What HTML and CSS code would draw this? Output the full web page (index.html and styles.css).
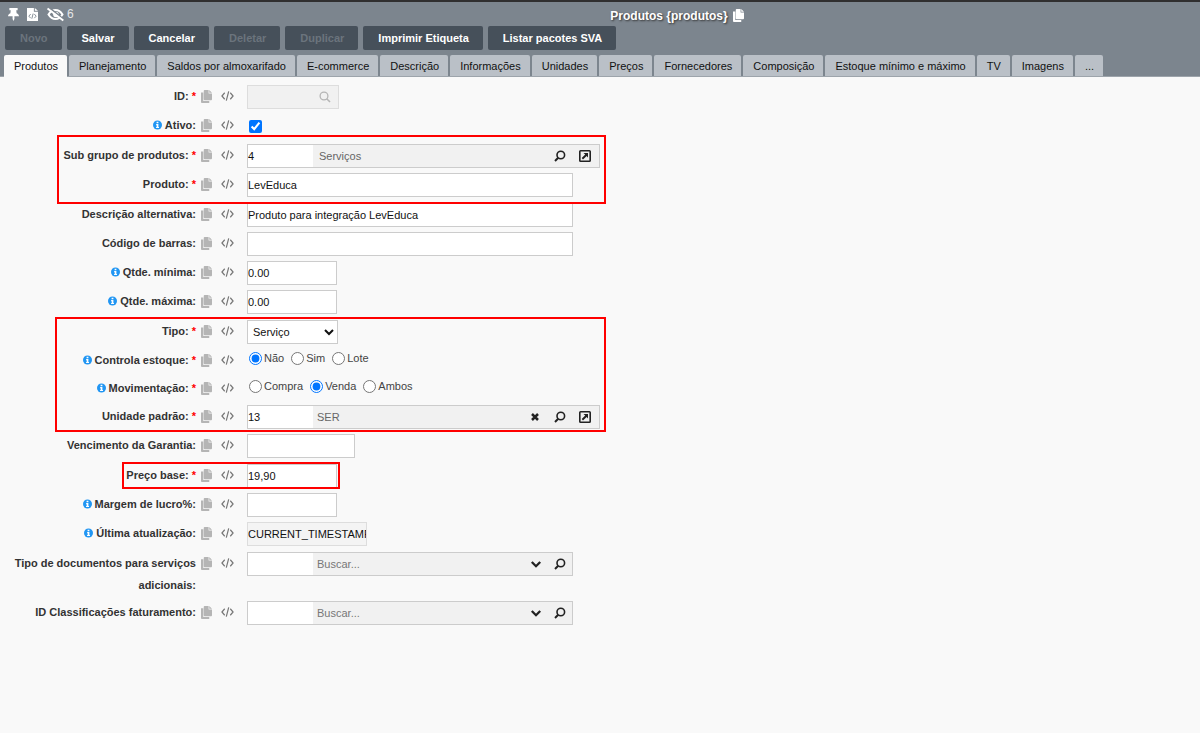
FILE: index.html
```html
<!DOCTYPE html>
<html lang="pt-BR">
<head>
<meta charset="utf-8">
<title>Produtos</title>
<link rel="stylesheet" href="styles.css">
</head>
<body>
<svg class="sprite" aria-hidden="true">
  <symbol id="copy" viewBox="0 0 12 14"><path d="M0 2.500h2.500V12H9v2H1a1 1 0 0 1-1-1zM4 0h4.300v3.700H12V10a1 1 0 0 1-1 1H4a1 1 0 0 1-1-1V1a1 1 0 0 1 1-1zM9 0l3 3H9z"/></symbol>
  <symbol id="code" viewBox="0 0 14 12"><path d="M4 2.500L1 6l3 3.500M10 2.500L13 6l-3 3.500M8.300 1L5.700 11" fill="none" stroke="currentColor" stroke-width="1.300"/></symbol>
  <symbol id="info" viewBox="0 0 10 10"><circle cx="5" cy="5" r="5"/><path d="M4 1.500h2v1.600H4zM3.500 4h2.500v3.200h.7v1.200H3.400V7.200h.7v-2h-.6z" fill="#fff"/></symbol>
  <symbol id="search" viewBox="0 0 12 12"><circle cx="5" cy="5" r="3.900" fill="none" stroke="currentColor" stroke-width="1.300"/><path d="M7.700 7.700L11 11" stroke="currentColor" stroke-width="1.600"/></symbol>
  <symbol id="lens" viewBox="0 0 12 12"><circle cx="6.800" cy="5" r="3.800" fill="none" stroke="currentColor" stroke-width="1.600"/><path d="M4.200 7.800L1 11" stroke="currentColor" stroke-width="2"/></symbol>
  <symbol id="open" viewBox="0 0 12 12"><rect x=".8" y=".8" width="10.400" height="10.400" rx=".8" fill="none" stroke="currentColor" stroke-width="1.600"/><path d="M4.500 3H9v4.500L7.600 6 4 9.400 2.700 8.100 6.200 4.600z"/></symbol>
  <symbol id="clear" viewBox="0 0 12 12"><path d="M3 3l6 6M9 3L3 9" stroke="currentColor" stroke-width="2.500"/></symbol>
  <symbol id="down" viewBox="0 0 12 12"><path d="M1.800 4L6 8.200 10.200 4" fill="none" stroke="currentColor" stroke-width="2.300"/></symbol>
</svg>

<header class="header">
  <div class="titlebar">
    <div class="tools">
      <svg class="tool-pin" viewBox="0 0 12 14" role="img" aria-label="Fixar"><path d="M1.500 0h9v2.300H9l.4 3.200C11 6.200 12 7.300 12 9H7v3l-1 2-1-2V9H0c0-1.700 1-2.800 2.600-3.500L3 2.300H1.500z"/></svg>
      <svg class="tool-file" viewBox="0 0 12 14" role="img" aria-label="Código"><path d="M0 0h7.500v4H12v10H0zM8.500 0L12 3H8.500z"/><path d="M4 6.500L2 8.800 4 11M8 6.500l2 2.300L8 11M6.700 6l-1.400 5.500" fill="none" stroke="#7c858e"/></svg>
      <svg class="tool-eye" viewBox="0 0 18 14" role="img" aria-label="Campos ocultos"><path d="M1.500 7C3.500 3.700 6 2.200 9 2.200s5.500 1.500 7.500 4.800c-2 3.300-4.500 4.800-7.500 4.800S3.500 10.300 1.500 7z" fill="none" stroke="currentColor" stroke-width="2.200"/><circle cx="9.500" cy="7" r="3"/><path d="M1.500-.8l16.500 13" stroke="#7c858e" stroke-width="1.800"/><path d="M.4.500l17 13" stroke="currentColor" stroke-width="2"/></svg>
      <span class="hidden-count">6</span>
    </div>
    <h1 class="title">Produtos {produtos} <svg class="icon-copy"><use href="#copy"/></svg></h1>
  </div>
  <div class="actions">
    <button class="action" disabled>Novo</button>
    <button class="action">Salvar</button>
    <button class="action">Cancelar</button>
    <button class="action" disabled>Deletar</button>
    <button class="action" disabled>Duplicar</button>
    <button class="action">Imprimir Etiqueta</button>
    <button class="action">Listar pacotes SVA</button>
  </div>
  <nav class="tabs">
    <button class="tab tab-active">Produtos</button>
    <button class="tab">Planejamento</button>
    <button class="tab">Saldos por almoxarifado</button>
    <button class="tab">E-commerce</button>
    <button class="tab">Descrição</button>
    <button class="tab">Informações</button>
    <button class="tab">Unidades</button>
    <button class="tab">Preços</button>
    <button class="tab">Fornecedores</button>
    <button class="tab">Composição</button>
    <button class="tab">Estoque mínimo e máximo</button>
    <button class="tab">TV</button>
    <button class="tab">Imagens</button>
    <button class="tab">...</button>
  </nav>
</header>

<main>
<form class="form">
  <div class="group">
    <div class="row">
      <div class="name"><label for="id">ID: <b class="req">*</b></label></div>
      <div class="aids"><svg class="icon-copy"><use href="#copy"/></svg><svg class="icon-code"><use href="#code"/></svg></div>
      <div class="lookup lookup-id"><input id="id" class="part part-id" disabled><svg class="icon muted"><use href="#search"/></svg></div>
    </div>
    <div class="row">
      <div class="name"><svg class="icon-info"><use href="#info"/></svg><label for="ativo">Ativo:</label></div>
      <div class="aids"><svg class="icon-copy"><use href="#copy"/></svg><svg class="icon-code"><use href="#code"/></svg></div>
      <div class="checks"><input id="ativo" class="tick" type="checkbox" checked></div>
    </div>
  </div>

  <div class="group mark mark-product">
    <div class="row">
      <div class="name"><label for="sub">Sub grupo de produtos: <b class="req">*</b></label></div>
      <div class="aids"><svg class="icon-copy"><use href="#copy"/></svg><svg class="icon-code"><use href="#code"/></svg></div>
      <div class="lookup lookup-wide"><input id="sub" class="part part-code" value="4"><span class="part-text">Serviços</span>
        <button type="button" class="pick" aria-label="Pesquisar"><svg class="icon"><use href="#lens"/></svg></button>
        <button type="button" class="pick" aria-label="Abrir"><svg class="icon"><use href="#open"/></svg></button></div>
    </div>
    <div class="row">
      <div class="name"><label for="produto">Produto: <b class="req">*</b></label></div>
      <div class="aids"><svg class="icon-copy"><use href="#copy"/></svg><svg class="icon-code"><use href="#code"/></svg></div>
      <input id="produto" class="field field-long" value="LevEduca">
    </div>
  </div>

  <div class="group">
    <div class="row">
      <div class="name"><label for="desc">Descrição alternativa:</label></div>
      <div class="aids"><svg class="icon-copy"><use href="#copy"/></svg><svg class="icon-code"><use href="#code"/></svg></div>
      <input id="desc" class="field field-long" value="Produto para integração LevEduca">
    </div>
    <div class="row">
      <div class="name"><label for="barras">Código de barras:</label></div>
      <div class="aids"><svg class="icon-copy"><use href="#copy"/></svg><svg class="icon-code"><use href="#code"/></svg></div>
      <input id="barras" class="field field-long">
    </div>
    <div class="row">
      <div class="name"><svg class="icon-info"><use href="#info"/></svg><label for="qmin">Qtde. mínima:</label></div>
      <div class="aids"><svg class="icon-copy"><use href="#copy"/></svg><svg class="icon-code"><use href="#code"/></svg></div>
      <input id="qmin" class="field field-short" value="0.00">
    </div>
    <div class="row">
      <div class="name"><svg class="icon-info"><use href="#info"/></svg><label for="qmax">Qtde. máxima:</label></div>
      <div class="aids"><svg class="icon-copy"><use href="#copy"/></svg><svg class="icon-code"><use href="#code"/></svg></div>
      <input id="qmax" class="field field-short" value="0.00">
    </div>
  </div>

  <div class="group mark mark-type">
    <div class="row">
      <div class="name"><label for="tipo">Tipo: <b class="req">*</b></label></div>
      <div class="aids"><svg class="icon-copy"><use href="#copy"/></svg><svg class="icon-code"><use href="#code"/></svg></div>
      <select id="tipo" class="field field-select"><option>Serviço</option></select>
    </div>
    <div class="row row-radio">
      <div class="name"><svg class="icon-info"><use href="#info"/></svg><span id="estoque">Controla estoque: <b class="req">*</b></span></div>
      <div class="aids"><svg class="icon-copy"><use href="#copy"/></svg><svg class="icon-code"><use href="#code"/></svg></div>
      <div class="checks" role="radiogroup" aria-labelledby="estoque">
        <label class="choice"><input class="tick" type="radio" name="estoque" checked>Não</label>
        <label class="choice"><input class="tick" type="radio" name="estoque">Sim</label>
        <label class="choice"><input class="tick" type="radio" name="estoque">Lote</label>
      </div>
    </div>
    <div class="row row-radio">
      <div class="name"><svg class="icon-info"><use href="#info"/></svg><span id="mov">Movimentação: <b class="req">*</b></span></div>
      <div class="aids"><svg class="icon-copy"><use href="#copy"/></svg><svg class="icon-code"><use href="#code"/></svg></div>
      <div class="checks" role="radiogroup" aria-labelledby="mov">
        <label class="choice"><input class="tick" type="radio" name="mov">Compra</label>
        <label class="choice"><input class="tick" type="radio" name="mov" checked>Venda</label>
        <label class="choice"><input class="tick" type="radio" name="mov">Ambos</label>
      </div>
    </div>
    <div class="row">
      <div class="name"><label for="unidade">Unidade padrão: <b class="req">*</b></label></div>
      <div class="aids"><svg class="icon-copy"><use href="#copy"/></svg><svg class="icon-code"><use href="#code"/></svg></div>
      <div class="lookup lookup-wide"><input id="unidade" class="part part-code" value="13"><input class="part part-name" value="SER" aria-label="Nome da unidade">
        <button type="button" class="pick" aria-label="Limpar"><svg class="icon"><use href="#clear"/></svg></button>
        <button type="button" class="pick" aria-label="Pesquisar"><svg class="icon"><use href="#lens"/></svg></button>
        <button type="button" class="pick" aria-label="Abrir"><svg class="icon"><use href="#open"/></svg></button></div>
    </div>
  </div>

  <div class="group group-tight">
    <div class="row">
      <div class="name"><label for="garantia">Vencimento da Garantia:</label></div>
      <div class="aids"><svg class="icon-copy"><use href="#copy"/></svg><svg class="icon-code"><use href="#code"/></svg></div>
      <input id="garantia" class="field field-date">
    </div>
  </div>

  <div class="group mark mark-price">
    <div class="row">
      <div class="name"><label for="preco">Preço base: <b class="req">*</b></label></div>
      <div class="aids"><svg class="icon-copy"><use href="#copy"/></svg><svg class="icon-code"><use href="#code"/></svg></div>
      <input id="preco" class="field field-short" value="19,90">
    </div>
  </div>

  <div class="group group-tight">
    <div class="row">
      <div class="name"><svg class="icon-info"><use href="#info"/></svg><label for="margem">Margem de lucro%:</label></div>
      <div class="aids"><svg class="icon-copy"><use href="#copy"/></svg><svg class="icon-code"><use href="#code"/></svg></div>
      <input id="margem" class="field field-short">
    </div>
    <div class="row">
      <div class="name"><svg class="icon-info"><use href="#info"/></svg><label for="atualizacao">Última atualização:</label></div>
      <div class="aids"><svg class="icon-copy"><use href="#copy"/></svg><svg class="icon-code"><use href="#code"/></svg></div>
      <input id="atualizacao" class="field field-stamp" value="CURRENT_TIMESTAMP" readonly>
    </div>
  </div>

  <div class="group">
    <div class="row">
      <div class="name"><label for="docs">Tipo de documentos para serviços adicionais:</label></div>
      <div class="aids"><svg class="icon-copy"><use href="#copy"/></svg><svg class="icon-code"><use href="#code"/></svg></div>
      <div class="lookup lookup-long"><input id="docs" class="part part-code"><input class="part part-name" placeholder="Buscar..." aria-label="Buscar tipo de documentos">
        <button type="button" class="pick" aria-label="Listar"><svg class="icon"><use href="#down"/></svg></button>
        <button type="button" class="pick" aria-label="Pesquisar"><svg class="icon"><use href="#lens"/></svg></button></div>
    </div>
    <div class="row">
      <div class="name"><label for="classif">ID Classificações faturamento:</label></div>
      <div class="aids"><svg class="icon-copy"><use href="#copy"/></svg><svg class="icon-code"><use href="#code"/></svg></div>
      <div class="lookup lookup-long"><input id="classif" class="part part-code"><input class="part part-name" placeholder="Buscar..." aria-label="Buscar classificação">
        <button type="button" class="pick" aria-label="Listar"><svg class="icon"><use href="#down"/></svg></button>
        <button type="button" class="pick" aria-label="Pesquisar"><svg class="icon"><use href="#lens"/></svg></button></div>
    </div>
  </div>
</form>
</main>
</body>
</html>
```
FILE: styles.css
```css
*, *::after { box-sizing: border-box; }

body {
  margin: 0;
  background: #f9f9f9;
  color: #333;
  font: 11px "Liberation Sans", Arial, sans-serif;
}

button, input, select { font: inherit; margin: 0; }

svg { fill: currentColor; flex: none; overflow: visible; }

.sprite { display: none; }

/* Header */
.header {
  background: #7c858e;
  border-top: 2px solid #302f30;
  border-bottom: 1px solid #9da4ab;
}

.titlebar {
  display: grid;
  grid-template-columns: 1fr auto 1fr;
  align-items: center;
  height: 24px;
  padding: 0 8px;
  color: #fff;
}

.tools { display: flex; align-items: center; }
.tool-pin { width: 11px; height: 13px; margin-right: 8px; }
.tool-file { width: 11px; height: 13px; margin-right: 9px; }
.tool-eye { width: 17px; height: 13px; margin-right: 3px; }
.hidden-count { font-size: 12px; color: #e4e6e8; }

.title {
  display: flex;
  align-items: center;
  gap: 5px;
  margin: 0;
  padding-left: 154px;
  padding-top: 3px;
  font-size: 12px;
  text-shadow: 1px 1px 2px #333;
}

.actions { display: flex; gap: 5px; padding: 0 5px; }

.action {
  height: 24px;
  padding: 0 14px 0 15px;
  border: 0;
  border-radius: 2px;
  background: #46505a;
  color: #fff;
  font-weight: bold;
}
.action:disabled { color: #6b747d; }

.tabs { display: flex; gap: 2px; padding: 5px 4px 0; }

.tab {
  height: 21px;
  padding: 0 9px 0 10px;
  border: 0;
  border-radius: 2px 2px 0 0;
  background: #bac0c7;
  color: #111;
}
.tab-active { background: #f9f9f9; margin-bottom: -1px; height: 22px; }

/* Form */
.form { display: flex; flex-direction: column; gap: 6px; padding: 8px 0; }

.group { display: flex; flex-direction: column; gap: 5px; position: relative; }
.group-tight { margin-top: -1px; }

.row {
  display: grid;
  grid-template-columns: 196px 41px 1fr;
  column-gap: 5px;
  min-height: 24px;
  align-items: start;
}
.row > :last-child { justify-self: start; }
.row-radio { min-height: 23px; }

.name {
  display: flex;
  justify-content: flex-end;
  align-items: center;
  gap: 3px;
  line-height: 22px;
  font-weight: bold;
  text-align: right;
}
.req { color: #f00; }

.aids { display: flex; align-items: center; gap: 9px; height: 22px; color: #b5b5b5; }
.icon-copy { width: 11px; height: 13px; }
.icon-code { width: 13px; height: 12px; color: #777; }
.icon-info { width: 9px; height: 10px; color: #2196f3; }
.icon { width: 12px; height: 12px; display: block; }
.muted { color: #b5b5b5; }

.field {
  height: 24px;
  padding: 0;
  border: 1px solid #ccc;
  background: #fff;
  color: #111;
}
.field-long { width: 326px; }
.field-short { width: 90px; }
.field-date { width: 108px; }
.field-select { width: 91px; padding: 0 1px; }
.field-stamp { width: 120px; background: #f4f4f4; border-color: #ddd; }

.lookup {
  display: flex;
  align-items: center;
  height: 24px;
  border: 1px solid #ccc;
  background: #f1f1f1;
}
.lookup-wide { width: 353px; padding-right: 8px; }
.lookup-long { width: 326px; padding-right: 6px; }
.lookup-id { width: 92px; padding-right: 7px; border-color: #ddd; }

.part { height: 22px; padding: 0; border: 0; background: none; color: #111; min-width: 0; }
.part-id { flex: 1; }
.part-code { width: 65px; background: #fff; }
.part-name { flex: 1; padding: 0 4px; color: #666; }
.part-name::placeholder { color: #777; }
.part-text { flex: 1; padding: 0 6px; color: #666; }

.pick { padding: 0; margin-left: 13px; border: 0; background: none; color: #222; }
.lookup-long .pick { margin-left: 12px; }

.checks { display: flex; align-items: center; gap: 7px; padding-left: 2px; }
.row > .checks { height: 24px; }
.row-radio > .checks { height: 18px; }
.choice { display: flex; align-items: center; gap: 2px; color: #444; }
.tick { width: 13px; height: 13px; }

/* Highlight frames drawn over the form */
.mark { z-index: 1; }
.mark::after {
  content: "";
  position: absolute;
  border: 2px solid #f00;
  pointer-events: none;
}
.mark-product::after { left: 57px; top: -9px; bottom: -7px; width: 549px; }
.mark-type::after { left: 55px; top: -3px; bottom: -3px; width: 551px; }
.mark-price::after { left: 122px; top: -2px; bottom: -1px; width: 218px; }
```
